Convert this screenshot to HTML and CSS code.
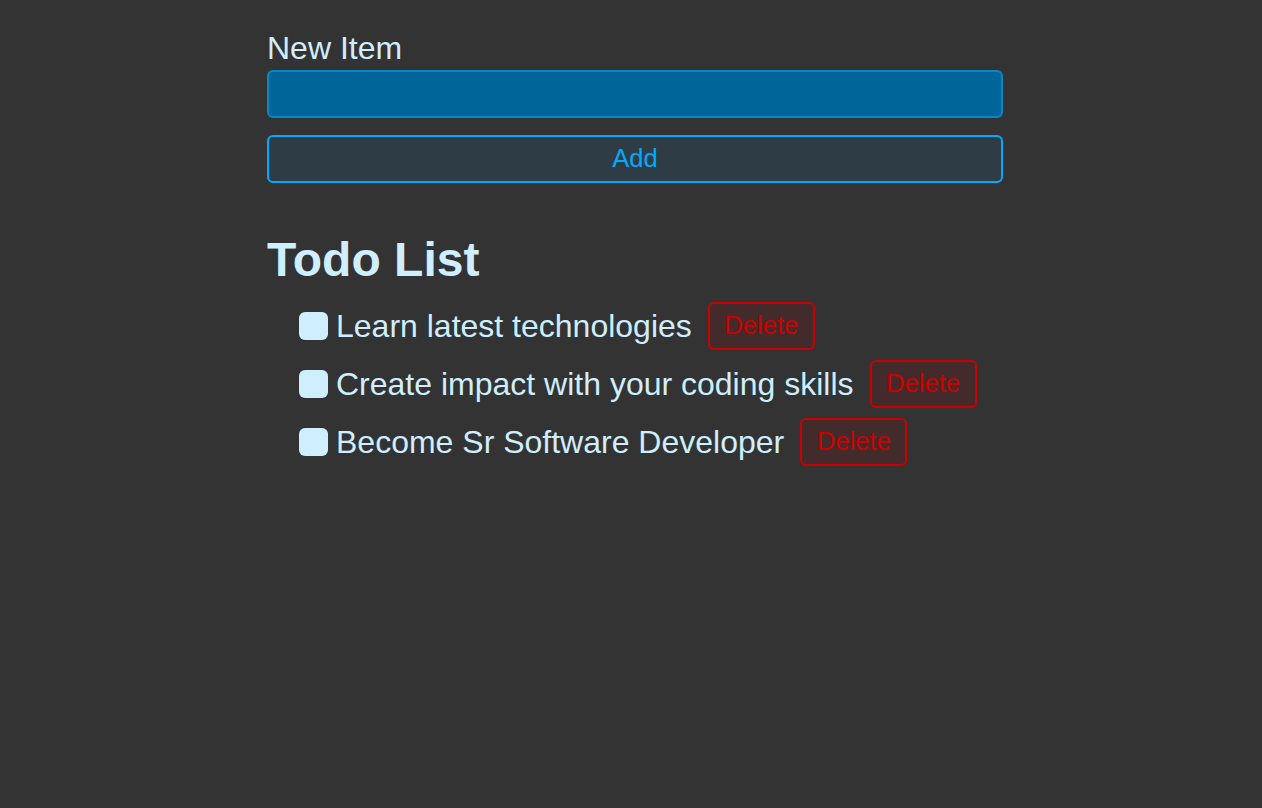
FILE: index.html
```html
<!DOCTYPE html>
<html lang="en">
<head>
<meta charset="utf-8">
<title>Todo</title>
<link rel="stylesheet" href="styles.css">
</head>
<body>
<main class="app">
  <form class="new-item-form">
    <label class="label" for="item">New Item</label>
    <input class="text-input" type="text" id="item">
    <button class="btn btn-add" type="button">Add</button>
  </form>
  <h1 class="header">Todo List</h1>
  <ul class="list">
    <li class="row">
      <label class="item-label"><input class="check" type="checkbox">Learn latest technologies</label>
      <button class="btn btn-danger" type="button">Delete</button>
    </li>
    <li class="row">
      <label class="item-label"><input class="check" type="checkbox">Create impact with your coding skills</label>
      <button class="btn btn-danger" type="button">Delete</button>
    </li>
    <li class="row">
      <label class="item-label"><input class="check" type="checkbox">Become Sr Software Developer</label>
      <button class="btn btn-danger" type="button">Delete</button>
    </li>
  </ul>
</main>
</body>
</html>
```
FILE: styles.css
```css
* { box-sizing: border-box; }
html, body { height: 100%; }
body {
  margin: 0;
  padding: 30px 0 0 8px;
  background: #333333;
  color: #cfeeff;
  font-family: "Liberation Sans", Arial, Helvetica, sans-serif;
  font-size: 32px;
}
.app {
  width: 736px;
  margin: 0 auto;
}
.new-item-form {
  display: flex;
  flex-direction: column;
}
.label {
  font-size: 32px;
  line-height: 37px;
  margin-bottom: 3px;
}
.text-input {
  height: 48px;
  margin: 0 0 17px 0;
  background: #006699;
  border: 2px solid #0a87c9;
  border-radius: 6px;
  color: #cfeeff;
  font: inherit;
  font-size: 25.6px;
  padding: 0 10px;
  outline: none;
}
.btn {
  font-family: inherit;
  font-size: 25.6px;
  border-radius: 6px;
  cursor: pointer;
  height: 48px;
  line-height: 1;
  padding: 0 14.5px;
}
.btn-add {
  width: 100%;
  background: #2e3d45;
  border: 2px solid #00aaff;
  color: #00aaff;
}
.header {
  margin: 49px 0 0 0;
  font-size: 48px;
  font-weight: bold;
  line-height: 55px;
}
.list {
  list-style: none;
  margin: 15px 0 0 0;
  padding: 0 0 0 32px;
  display: flex;
  flex-direction: column;
  gap: 10px;
}
.row {
  display: flex;
  align-items: center;
  gap: 16px;
  height: 48px;
}
.item-label {
  display: flex;
  align-items: center;
  gap: 8px;
  line-height: 37px;
}
.check {
  appearance: none;
  -webkit-appearance: none;
  margin: 0;
  width: 29px;
  height: 28px;
  border-radius: 6px;
  background: #cfeeff;
  border: none;
}
.btn-danger {
  background: #432b2b;
  border: 2px solid #cc0000;
  color: #cc0000;
}
```
